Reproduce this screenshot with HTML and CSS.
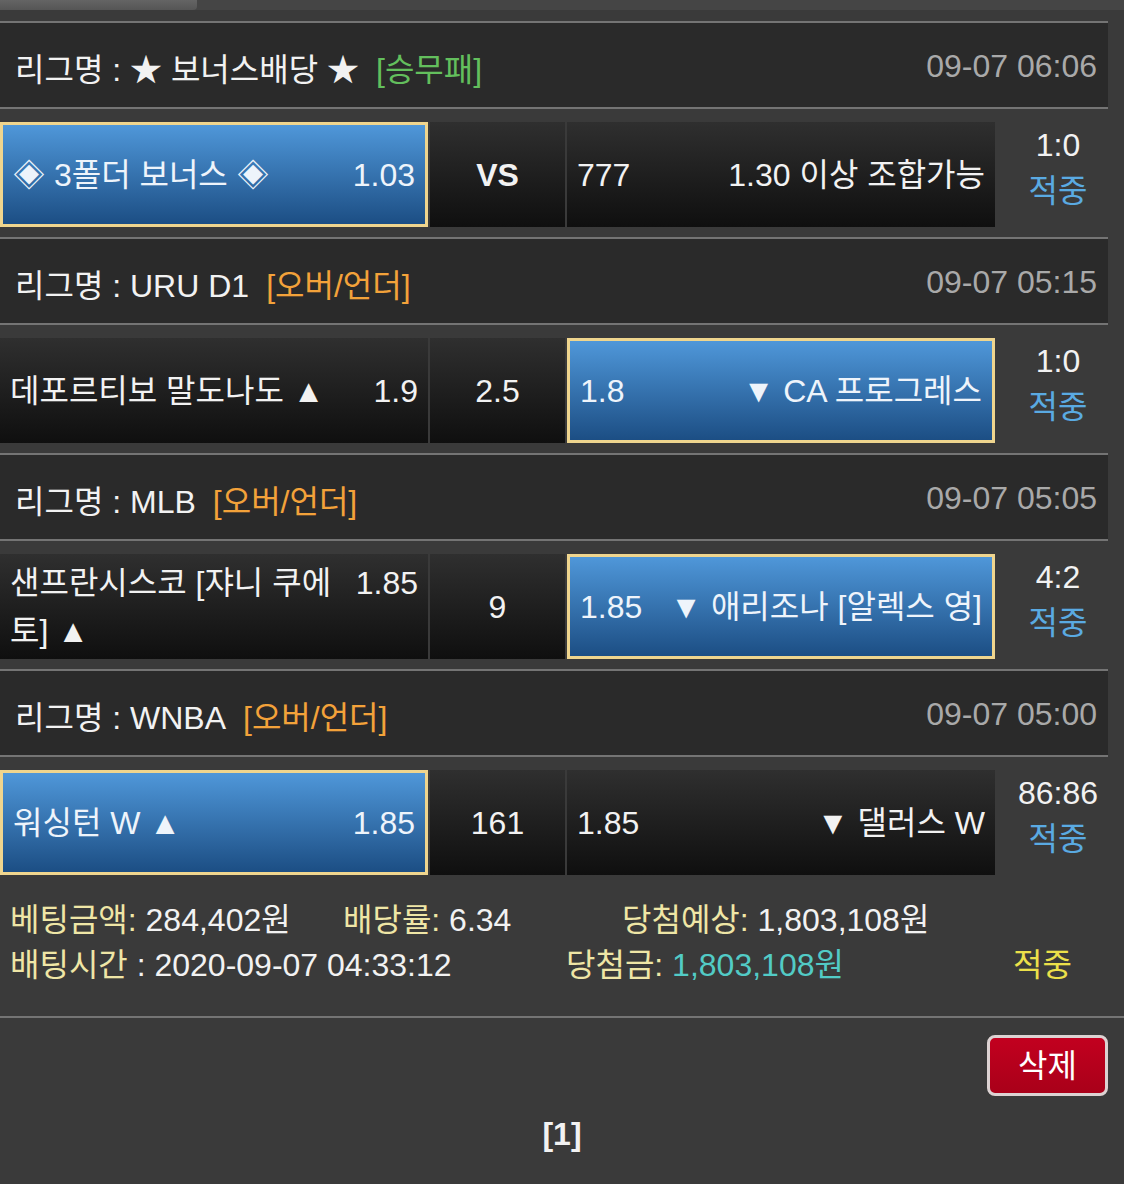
FILE: index.html
```html
<!DOCTYPE html>
<html lang="ko">
<head>
    <meta charset="UTF-8">
    <meta name="viewport" content="width=device-width, initial-scale=1.0">
    <title>배팅내역</title>
    <link rel="stylesheet" href="styles.css">
</head>
<body>
    <div class="topbar"><div class="tab"></div></div>

    <div class="bet-list">
        <!-- 보너스 -->
        <div class="game">
            <div class="league">
                <span class="league-name">리그명 : ★ 보너스배당 ★<span class="tag tag-green">[승무패]</span></span>
                <span class="league-date">09-07 06:06</span>
            </div>
            <div class="match">
                <div class="pick home selected">
                    <div class="pick-body"><span class="odds">1.03</span>◈ 3폴더 보너스 ◈</div>
                </div>
                <div class="pick mid vs">VS</div>
                <div class="pick away">
                    <div class="pick-body"><span class="odds">777</span>1.30 이상 조합가능</div>
                </div>
                <div class="score">
                    <span>1:0</span>
                    <span class="hit">적중</span>
                </div>
            </div>
        </div>

        <div class="game">
            <div class="league">
                <span class="league-name">리그명 : URU D1<span class="tag tag-orange">[오버/언더]</span></span>
                <span class="league-date">09-07 05:15</span>
            </div>
            <div class="match">
                <div class="pick home">
                    <div class="pick-body"><span class="odds">1.9</span>데포르티보 말도나도 ▲</div>
                </div>
                <div class="pick mid">2.5</div>
                <div class="pick away selected">
                    <div class="pick-body"><span class="odds">1.8</span>▼ CA 프로그레스</div>
                </div>
                <div class="score">
                    <span>1:0</span>
                    <span class="hit">적중</span>
                </div>
            </div>
        </div>

        <div class="game">
            <div class="league">
                <span class="league-name">리그명 : MLB<span class="tag tag-orange">[오버/언더]</span></span>
                <span class="league-date">09-07 05:05</span>
            </div>
            <div class="match">
                <div class="pick home">
                    <div class="pick-body"><span class="odds">1.85</span>샌프란시스코 [쟈니 쿠에토] ▲</div>
                </div>
                <div class="pick mid">9</div>
                <div class="pick away selected">
                    <div class="pick-body"><span class="odds">1.85</span>▼ 애리조나 [알렉스 영]</div>
                </div>
                <div class="score">
                    <span>4:2</span>
                    <span class="hit">적중</span>
                </div>
            </div>
        </div>

        <div class="game">
            <div class="league">
                <span class="league-name">리그명 : WNBA<span class="tag tag-orange">[오버/언더]</span></span>
                <span class="league-date">09-07 05:00</span>
            </div>
            <div class="match">
                <div class="pick home selected">
                    <div class="pick-body"><span class="odds">1.85</span>워싱턴 W ▲</div>
                </div>
                <div class="pick mid">161</div>
                <div class="pick away">
                    <div class="pick-body"><span class="odds">1.85</span>▼ 댈러스 W</div>
                </div>
                <div class="score">
                    <span>86:86</span>
                    <span class="hit">적중</span>
                </div>
            </div>
        </div>
    </div>

    <div class="summary">
        <div class="summary-row first">
            <span><span class="label">베팅금액:</span> 284,402원</span>
            <span><span class="label">배당률:</span> 6.34</span>
            <span><span class="label">당첨예상:</span> 1,803,108원</span>
        </div>
        <div class="summary-row second">
            <span><span class="label">배팅시간</span> : 2020-09-07 04:33:12</span>
            <span><span class="label">당첨금:</span> <span class="won">1,803,108원</span></span>
            <span class="result">적중</span>
        </div>
    </div>

    <div class="actions">
        <button class="btn-delete">삭제</button>
    </div>
    <div class="pager">[1]</div>
</body>
</html>
```

FILE: styles.css
```css
body {
    margin: 0;
    background-color: #3a3a3a;
    color: #f2f2f2;
    font-family: "Liberation Sans", "Noto Sans CJK KR", sans-serif;
    font-size: 32px;
}

.topbar {
    height: 10px;
    background-color: #454545;
}

    .topbar .tab {
        width: 197px;
        height: 10px;
        background: linear-gradient(#646464, #555555);
        border-bottom-right-radius: 4px;
    }

.bet-list {
    padding-top: 11px;
}

.league {
    box-sizing: border-box;
    display: flex;
    justify-content: space-between;
    align-items: center;
    height: 88px;
    margin-right: 16px;
    padding: 3px 11px 0 15px;
    background-color: #2a2a2a;
    border-top: 2px solid #747474;
    border-bottom: 2px solid #747474;
}

.league-date {
    color: #a9a9a9;
}

.tag {
    margin-left: 17px;
}

.tag-green {
    color: #63bf5d;
}

.tag-orange {
    color: #f3a23a;
}

.match {
    display: flex;
    gap: 2px;
    height: 105px;
    margin: 13px 0 10px;
}

.pick {
    box-sizing: border-box;
    width: 428px;
    padding: 0 10px;
    display: flex;
    align-items: center;
    line-height: 48px;
    background: linear-gradient(#2f2f2f, #0f0f0f);
}

    .pick.selected {
        background: linear-gradient(#4f97d9, #1c4e84);
        border: 3px solid #efd58e;
        color: #eef4fb;
    }

    .pick.mid {
        width: 135px;
        justify-content: center;
    }

    .pick.vs {
        font-weight: bold;
    }

.pick-body {
    width: 100%;
}

.home .odds {
    float: right;
    margin-left: 20px;
}

.away .odds {
    float: left;
    margin-right: 20px;
}

.away .pick-body {
    text-align: right;
}

.score {
    width: 122px;
    display: flex;
    flex-direction: column;
    align-items: center;
    line-height: 46px;
}

.hit {
    color: #5aaae2;
}

.summary {
    padding: 13px 0 28px 10px;
    line-height: 45px;
    border-bottom: 2px solid #747474;
}

.summary-row {
    display: grid;
}

    .summary-row.first {
        grid-template-columns: 333px 279px auto;
    }

    .summary-row.second {
        grid-template-columns: 556px 447px auto;
    }

.label {
    color: #efe6a6;
}

.won {
    color: #52cbc6;
}

.result {
    color: #ece04a;
}

.actions {
    display: flex;
    justify-content: flex-end;
    padding: 17px 16px 0;
}

.btn-delete {
    box-sizing: border-box;
    width: 121px;
    height: 61px;
    padding: 0 0 6px;
    color: #ffffff;
    font-family: inherit;
    font-size: 32px;
    background: linear-gradient(#c2001f, #a90019);
    border: 3px solid #dcd2d2;
    border-radius: 8px;
    cursor: pointer;
}

.pager {
    margin-top: 18px;
    line-height: 40px;
    text-align: center;
    font-weight: bold;
}
```
